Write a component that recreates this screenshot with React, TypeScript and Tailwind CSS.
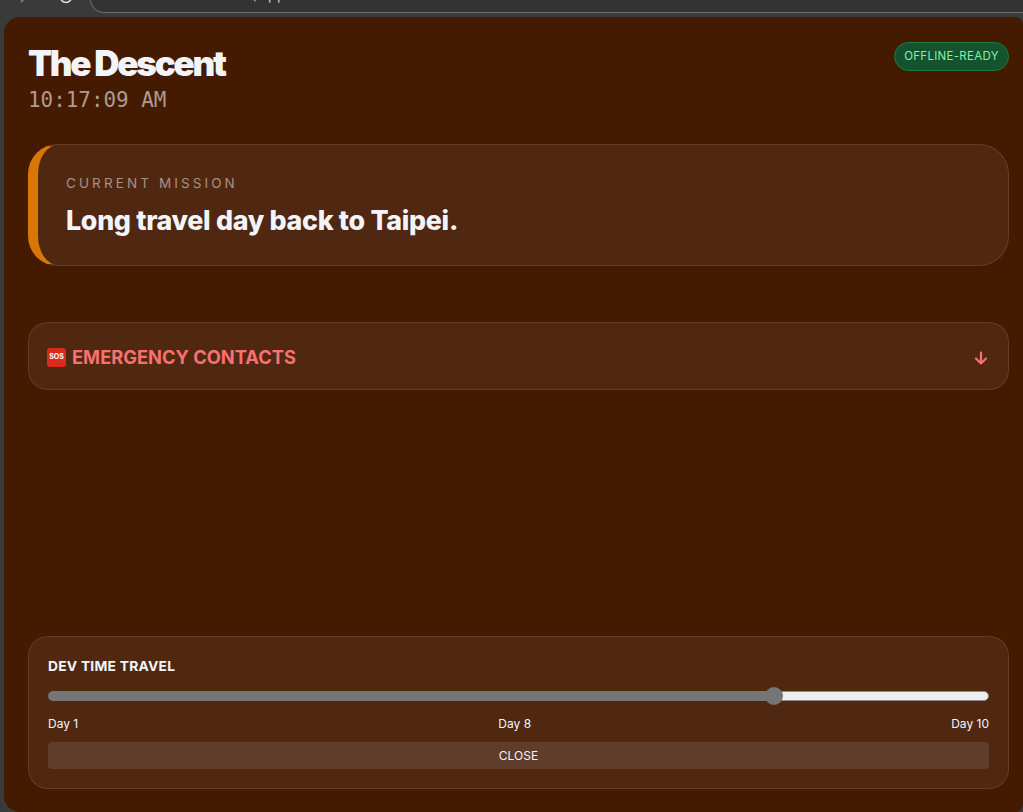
export default function App() {
  return (
    <div className="h-[812px] w-[1023px] overflow-hidden bg-[#3a3a3a] flex flex-col font-['Inter',sans-serif]">
      <div className="h-[17px] shrink-0 relative overflow-hidden">
        <svg className="absolute left-[16px] top-0" width="110" height="10" viewBox="0 0 110 10" fill="none" stroke="#8a8a8a" strokeWidth="1.5" aria-hidden="true">
          <path d="M8 -1 5 2" />
          <circle cx="50" cy="-3" r="5.500" stroke="#dcdcdc" />
          <circle cx="92" cy="-3" r="5.500" stroke="#dcdcdc" />
        </svg>
        <div className="absolute left-[90px] right-0 top-[-20px] h-[33px] rounded-l-[14px] border border-[#6f6f6f] border-r-0 bg-[#333333]">
          <span className="absolute left-[60px] top-[6px] text-[14px] leading-[16px] tracking-[0.6px] text-[#cfcfcf] whitespace-nowrap">localhost:5173/app</span>
        </div>
      </div>
      <main className="flex-1 ml-[4px] rounded-l-[16px] rounded-r-[8px] bg-[#441a00] pl-[24px] pr-[14px] pt-[24px] pb-[23px] flex flex-col">
        <header className="flex justify-between items-start">
          <div>
            <h1 className="text-[35px] leading-[44px] font-black tracking-[-2.2px] text-[#f1f5f9]">The Descent</h1>
            <div className="font-['DejaVu_Sans_Mono',monospace] text-[20.9px] leading-[28px] text-[#b09a8e] mt-[1px]">10:17:09 AM</div>
          </div>
          <span className="mt-[1px] h-[29px] w-[115px] flex items-center justify-center rounded-full border border-[#1c7a3f] bg-[#14532d] text-[11.5px] tracking-[0.3px] text-[#86efac]">OFFLINE-READY</span>
        </header>
        <section className="mt-[30px] h-[122px] rounded-[30px] border border-[#ffffff1a] border-l-[10px] border-l-[#d97706] bg-[#502812] pl-[28px] pt-[30px]">
          <div className="text-[13.5px] leading-[16px] tracking-[3.1px] text-[#a89084]">CURRENT MISSION</div>
          <div className="mt-[13px] text-[26.800px] leading-[32px] font-extrabold tracking-[-0.3px] text-[#f1f5f9]">Long travel day back to Taipei.</div>
        </section>
        <section className="mt-[56px] h-[68px] rounded-[20px] border border-[#ffffff1a] bg-[#502812] pl-[18px] pr-[20px] pt-[3px] flex items-center justify-between">
          <div className="flex items-center gap-[6px] text-[18.3px] font-bold text-[#f87171]">
            <span className="h-[19px] w-[19px] rounded-[3px] bg-[#d92a1c] flex items-center justify-center text-[7px] font-bold text-white">SOS</span>
            EMERGENCY CONTACTS
          </div>
          <svg width="14" height="16" viewBox="0 0 14 16" fill="none" stroke="#f87171" strokeWidth="2.2" strokeLinecap="round" strokeLinejoin="round" aria-hidden="true">
            <path d="M7 2.500v11M2 8.500l5 5 5-5" />
          </svg>
        </section>
        <section className="mt-auto h-[153px] rounded-[20px] border border-[#ffffff1a] bg-[#502812] px-[19px] pt-[20px]">
          <div className="text-[13.800px] leading-[18px] font-bold tracking-[0.25px] text-[#f1f5f9]">DEV TIME TRAVEL</div>
          <div className="mt-[12px] h-[18px] relative flex items-center">
            <div className="h-[10px] rounded-l-full bg-[#757575] grow-0 basis-[77.2%]" />
            <div className="flex-1 h-[10px] rounded-r-full bg-[#efefef] border border-[#8a8a8a]" />
            <div className="absolute left-[77.2%] -translate-x-1/2 h-[18px] w-[18px] rounded-full bg-[#757575]" />
          </div>
          <div className="mt-[11px] flex justify-between text-[12px] leading-[16px] text-[#f1f5f9]">
            <span>Day 1</span>
            <span>Day 8</span>
            <span>Day 10</span>
          </div>
          <button className="mt-[10px] w-full h-[27px] rounded-[4px] bg-[#603c2a] text-[12px] text-[#f1f5f9]">CLOSE</button>
        </section>
      </main>
    </div>
  );
}
